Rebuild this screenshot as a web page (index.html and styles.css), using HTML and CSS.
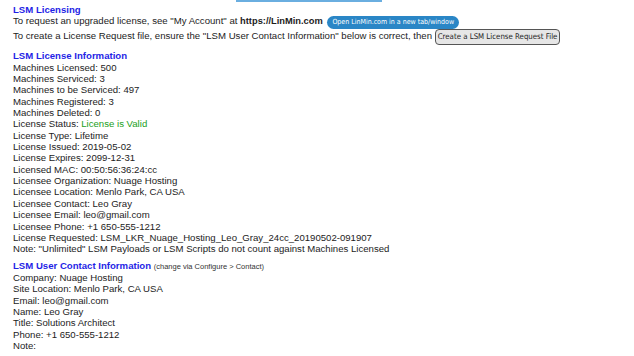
FILE: index.html
```html
<!DOCTYPE html>
<html lang="en">
<head>
    <meta charset="UTF-8">
    <meta name="viewport" content="width=device-width, initial-scale=1.0">
    <title>LSM Licensing</title>
    <link rel="stylesheet" href="styles.css">
</head>
<body>
    <div class="tab-edge"></div>

    <div class="section intro">
        <h3 class="title">LSM Licensing</h3>
        <p>To request an upgraded license, see "My Account" at <b>https://LinMin.com</b> <button class="btn-open">Open LinMin.com in a new tab/window</button></p>
        <p>To create a License Request file, ensure the "LSM User Contact Information" below is correct, then <button class="btn-create">Create a LSM License Request File</button></p>
    </div>

    <div class="section">
        <h3 class="title">LSM License Information</h3>
        <p>Machines Licensed: 500</p>
        <p>Machines Serviced: 3</p>
        <p>Machines to be Serviced: 497</p>
        <p>Machines Registered: 3</p>
        <p>Machines Deleted: 0</p>
        <p>License Status: <span class="valid">License is Valid</span></p>
        <p>License Type: Lifetime</p>
        <p>License Issued: 2019-05-02</p>
        <p>License Expires: 2099-12-31</p>
        <p>Licensed MAC: 00:50:56:36:24:cc</p>
        <p>Licensee Organization: Nuage Hosting</p>
        <p>Licensee Location: Menlo Park, CA USA</p>
        <p>Licensee Contact: Leo Gray</p>
        <p>Licensee Email: leo@gmail.com</p>
        <p>Licensee Phone: +1 650-555-1212</p>
        <p>License Requested: LSM_LKR_Nuage_Hosting_Leo_Gray_24cc_20190502-091907</p>
        <p>Note: "Unlimited" LSM Payloads or LSM Scripts do not count against Machines Licensed</p>
    </div>

    <div class="section">
        <h3 class="title">LSM User Contact Information <span class="hint">(change via Configure &gt; Contact)</span></h3>
        <p>Company: Nuage Hosting</p>
        <p>Site Location: Menlo Park, CA USA</p>
        <p>Email: leo@gmail.com</p>
        <p>Name: Leo Gray</p>
        <p>Title: Solutions Architect</p>
        <p>Phone: +1 650-555-1212</p>
        <p>Note:</p>
    </div>
</body>
</html>
```

FILE: styles.css
```css
body{
    margin: 0;
    padding: 0 0 0 13px;
    background: #fff;
    color: #1c1c1c;
    font-family: "Liberation Sans", Arial, sans-serif;
    font-size: 9.6px;
    line-height: 11.35px;
}
.tab-edge{
    width: 146px;
    height: 2px;
    margin-left: 223px;
    background: #6aaee0;
}
.section{
    margin-bottom: 5px;
}
.intro{
    margin-top: 2px;
}
.title{
    margin: 0;
    font-size: 9.6px;
    font-weight: bold;
    color: #1f1fe6;
}
p{
    margin: 0;
}
b{
    font-size: 9.3px;
}
.valid{
    color: #22a022;
}
.hint{
    font-weight: normal;
    font-size: 7.5px;
    color: #333;
}
.btn-open{
    font-family: "DejaVu Sans", sans-serif;
    font-stretch: condensed;
    font-size: 7px;
    line-height: 9px;
    color: #fff;
    background: #2a86c6;
    border: none;
    border-radius: 7px;
    padding: 2px 5px;
    margin-left: 2px;
}
.btn-create{
    font-family: "DejaVu Sans", sans-serif;
    font-stretch: condensed;
    font-size: 7.8px;
    line-height: 10px;
    color: #222;
    background: #e6e6e6;
    border: 1px solid #555;
    border-radius: 4px;
    padding: 2px 2px;
}
```
